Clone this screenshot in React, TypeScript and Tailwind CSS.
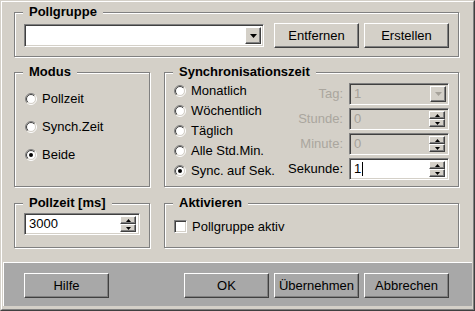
import type { ReactNode } from "react"

const raised =
  "border border-t-white border-l-white border-r-[#404040] border-b-[#404040] shadow-[inset_-1px_-1px_0_#808080]"
const sunken =
  "border border-t-[#808080] border-l-[#808080] border-r-white border-b-white shadow-[inset_1px_1px_0_#404040,inset_-1px_-1px_0_#d4d0c8]"

interface GroupBoxProps {
  title: string
  className: string
  children?: ReactNode
}

const GroupBox = ({ title, className, children }: GroupBoxProps) => (
  <div className={"relative border border-[#808080] shadow-[inset_1px_1px_0_#fff,1px_1px_0_#fff] " + className}>
    <span className="absolute left-[8px] top-[-9px] bg-[#d4d0c8] px-[6px] text-[13px] font-bold leading-[16px]">
      {title}
    </span>
    {children}
  </div>
)

const Button = ({ text, className = "" }: { text: string; className?: string }) => (
  <div className={"flex h-[25px] w-[85px] shrink-0 items-center justify-center " + raised + " " + className}>
    {text}
  </div>
)

const Radio = ({ checked }: { checked?: boolean }) => (
  <svg width="12" height="12" viewBox="0 0 12 12" className="shrink-0">
    <defs>
      <linearGradient id="radioOuter" x1="0" y1="0" x2="1" y2="1">
        <stop offset="0.5" stopColor="#808080" />
        <stop offset="0.5" stopColor="#ffffff" />
      </linearGradient>
      <linearGradient id="radioInner" x1="0" y1="0" x2="1" y2="1">
        <stop offset="0.5" stopColor="#404040" />
        <stop offset="0.5" stopColor="#d4d0c8" />
      </linearGradient>
    </defs>
    <circle cx="6" cy="6" r="5.5" fill="none" stroke="url(#radioOuter)" />
    <circle cx="6" cy="6" r="4.5" fill="#fff" stroke="url(#radioInner)" />
    {checked && <circle cx="6" cy="6" r="2" fill="#000" />}
  </svg>
)

const RadioRow = ({ label, checked }: { label: string; checked?: boolean }) => (
  <div className="flex h-[16px] items-center gap-[5px]">
    <Radio checked={checked} />
    <span>{label}</span>
  </div>
)

const ArrowDown = ({ color = "#000" }: { color?: string }) => (
  <svg width="7" height="4" viewBox="0 0 7 4">
    <polygon points="0,0 7,0 3.5,4" fill={color} />
  </svg>
)

const SpinButtons = () => (
  <div className="mr-[1px] flex w-[16px] shrink-0 flex-col">
    <div className={"flex flex-1 items-center justify-center bg-[#d4d0c8] " + raised}>
      <svg width="5" height="3" viewBox="0 0 5 3">
        <polygon points="2.5,0 5,3 0,3" fill="#000" />
      </svg>
    </div>
    <div className={"flex flex-1 items-center justify-center bg-[#d4d0c8] " + raised}>
      <svg width="5" height="3" viewBox="0 0 5 3">
        <polygon points="0,0 5,0 2.5,3" fill="#000" />
      </svg>
    </div>
  </div>
)

const Spinner = ({ value, width, disabled, caret }: { value: string; width: string; disabled?: boolean; caret?: boolean }) => (
  <div className={"flex h-[22px] p-[2px] " + width + " " + sunken + (disabled ? " bg-[#d4d0c8] text-[#a6a29a]" : " bg-white")}>
    <div className="flex flex-1 items-center pl-[2px]">
      {value}
      {caret && <span className="ml-[1px] h-[14px] w-[1px] bg-black" />}
    </div>
    <SpinButtons />
  </div>
)

const App = () => {
  return (
    <div className="h-[311px] w-[475px] border border-b-[#404040] border-l-[#d4d0c8] border-r-[#404040] border-t-[#d4d0c8] bg-[#d4d0c8] font-['Liberation_Sans',Arial,sans-serif] text-[13px] text-black">
      <div className="flex h-full flex-col border border-b-[#808080] border-l-white border-r-[#808080] border-t-white">
        <div className="flex flex-col pl-[12px] pt-[10px]">
          <GroupBox title="Pollgruppe" className="h-[45px] w-[445px]">
            <div className="flex items-center pl-[9px] pt-[10px]">
              <div className={"flex h-[23px] w-[240px] bg-white p-[2px] " + sunken}>
                <div className="flex-1" />
                <div className={"flex w-[16px] items-center justify-center bg-[#d4d0c8] " + raised}>
                  <ArrowDown />
                </div>
              </div>
              <Button text="Entfernen" className="ml-[10px]" />
              <Button text="Erstellen" className="ml-[5px]" />
            </div>
          </GroupBox>

          <div className="mt-[15px] flex gap-[14px]">
            <GroupBox title="Modus" className="h-[115px] w-[136px]">
              <div className="flex flex-col gap-[12px] pl-[10px] pt-[18px]">
                <RadioRow label="Pollzeit" />
                <RadioRow label="Synch.Zeit" />
                <RadioRow label="Beide" checked />
              </div>
            </GroupBox>
            <GroupBox title="Synchronisationszeit" className="h-[115px] w-[295px]">
              <div className="flex justify-between pl-[9px] pr-[9px] pt-[10px]">
                <div className="flex flex-col gap-[4px]">
                  <RadioRow label="Monatlich" />
                  <RadioRow label="Wöchentlich" />
                  <RadioRow label="Täglich" />
                  <RadioRow label="Alle Std.Min." />
                  <RadioRow label="Sync. auf Sek." checked />
                </div>
                <div className="flex flex-col gap-[3px]">
                  <div className="flex items-center justify-end gap-[6px]">
                    <span className="text-[#aaa69e]">Tag:</span>
                    <div className={"flex h-[22px] w-[100px] bg-[#d4d0c8] p-[2px] text-[#a6a29a] " + sunken}>
                      <div className="flex flex-1 items-center pl-[2px]">1</div>
                      <div className={"flex w-[16px] items-center justify-center bg-[#d4d0c8] " + raised}>
                        <ArrowDown color="#a6a29a" />
                      </div>
                    </div>
                  </div>
                  <div className="flex items-center justify-end gap-[6px]">
                    <span className="text-[#aaa69e]">Stunde:</span>
                    <Spinner value="0" width="w-[100px]" disabled />
                  </div>
                  <div className="flex items-center justify-end gap-[6px]">
                    <span className="text-[#aaa69e]">Minute:</span>
                    <Spinner value="0" width="w-[100px]" disabled />
                  </div>
                  <div className="flex items-center justify-end gap-[6px]">
                    <span>Sekunde:</span>
                    <Spinner value="1" width="w-[100px]" caret />
                  </div>
                </div>
              </div>
            </GroupBox>
          </div>

          <div className="mt-[16px] flex gap-[14px]">
            <GroupBox title="Pollzeit [ms]" className="h-[45px] w-[136px]">
              <div className="pl-[9px] pt-[9px]">
                <Spinner value="3000" width="w-[116px]" />
              </div>
            </GroupBox>
            <GroupBox title="Aktivieren" className="h-[45px] w-[295px]">
              <div className="flex items-center gap-[5px] pl-[9px] pt-[13px]">
                <div className={"h-[13px] w-[13px] bg-white " + sunken} />
                <span>Pollgruppe aktiv</span>
              </div>
            </GroupBox>
          </div>
        </div>

        <div className="mx-[1px] mt-[14px] flex h-[44px] border-l border-t border-l-white border-t-white bg-[#a8a8a8] pl-[20px] pt-[10px]">
          <Button text="Hilfe" />
          <Button text="OK" className="ml-[75px]" />
          <Button text="Übernehmen" className="ml-[5px]" />
          <Button text="Abbrechen" className="ml-[5px]" />
        </div>
      </div>
    </div>
  )
}

export default App
